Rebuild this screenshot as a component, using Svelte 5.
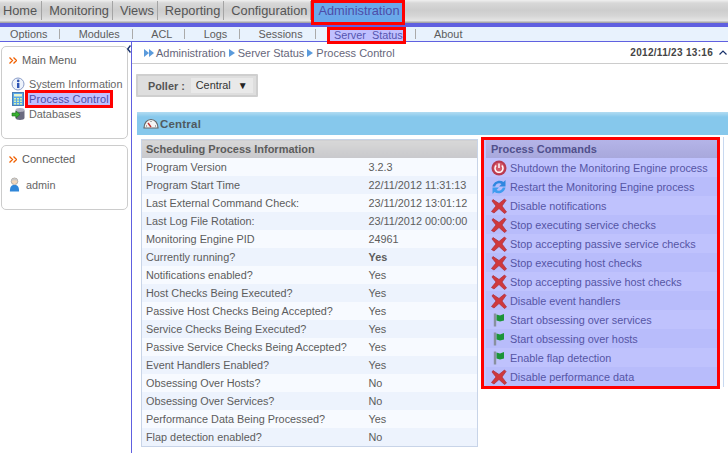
<script>
  const nav = ['Home', 'Monitoring', 'Views', 'Reporting', 'Configuration'];
  const sub = ['Options', 'Modules', 'ACL', 'Logs', 'Sessions'];
  const info = [
    ['Program Version', '3.2.3'],
    ['Program Start Time', '22/11/2012 11:31:13'],
    ['Last External Command Check:', '23/11/2012 13:01:12'],
    ['Last Log File Rotation:', '23/11/2012 00:00:00'],
    ['Monitoring Engine PID', '24961'],
    ['Currently running?', 'Yes', true],
    ['Notifications enabled?', 'Yes'],
    ['Host Checks Being Executed?', 'Yes'],
    ['Passive Host Checks Being Accepted?', 'Yes'],
    ['Service Checks Being Executed?', 'Yes'],
    ['Passive Service Checks Being Accepted?', 'Yes'],
    ['Event Handlers Enabled?', 'Yes'],
    ['Obsessing Over Hosts?', 'No'],
    ['Obsessing Over Services?', 'No'],
    ['Performance Data Being Processed?', 'Yes'],
    ['Flap detection enabled?', 'No']
  ];
  const commands = [
    ['power', 'Shutdown the Monitoring Engine process'],
    ['refresh', 'Restart the Monitoring Engine process'],
    ['x', 'Disable notifications'],
    ['x', 'Stop executing service checks'],
    ['x', 'Stop accepting passive service checks'],
    ['x', 'Stop executing host checks'],
    ['x', 'Stop accepting passive host checks'],
    ['x', 'Disable event handlers'],
    ['flag', 'Start obsessing over services'],
    ['flag', 'Start obsessing over hosts'],
    ['flag', 'Enable flap detection'],
    ['x', 'Disable performance data']
  ];
</script>

<div class="page">
  <nav class="topnav">
    {#each nav as item}
      <span class="topitem">{item}</span>
    {/each}
    <span class="topactive">Administration</span>
  </nav>
  <div class="band"></div>
  <div class="subnav">
    {#each sub as item}
      <span class="subitem">{item}</span>
    {/each}
    <span class="subitem subactive"><b>Server&nbsp; Status</b></span>
    <span class="subitem last">About</span>
  </div>

  <div class="body">
    <aside class="side">
      <section class="card menu">
        <h3>
          <svg class="chev" viewBox="0 0 8 7" width="8" height="7"><path d="M.5 .5 3.500 3.500.5 6.500M4.500 .5 7.500 3.500 4.500 6.500" fill="none" stroke="#f06000" stroke-width="1.300"/></svg>
          Main Menu
        </h3>
        <ul>
          <li>
            <svg viewBox="0 0 14 14" width="14" height="14"><circle cx="7" cy="7" r="6" fill="#eef3fb" stroke="#8a9cc8"/><rect x="6" y="6" width="2.400" height="5" fill="#2f55b5"/><circle cx="7.200" cy="3.900" r="1.300" fill="#2f55b5"/></svg>
            <span>System Information</span>
          </li>
          <li>
            <svg viewBox="0 0 14 14" width="14" height="14"><rect x="1.500" y="0.500" width="11" height="13" fill="#58a8e8" stroke="#4a7fb8"/><rect x="3" y="2" width="8" height="2.500" fill="#e8f4d0"/><path d="M3 6h2v1.500H3zM6 6h2v1.500H6zM9 6h2v1.500H9zM3 8.500h2V10H3zM6 8.500h2V10H6zM9 8.500h2V10H9zM3 11h2v1.500H3zM6 11h2v1.500H6zM9 11h2v1.500H9z" fill="#d8f0a8"/></svg>
            <span class="hl">Process Control</span>
          </li>
          <li>
            <svg viewBox="0 0 14 14" width="14" height="14"><ellipse cx="9" cy="3" rx="4.500" ry="2" fill="#b0b0c0"/><path d="M4.500 3v8c0 1.100 2 2 4.500 2s4.500-.9 4.500-2V3c0 1.100-2 2-4.500 2S4.500 4.100 4.500 3z" fill="#6a6a80"/><path d="M1 6h4V4l4 3.500L5 11V9H1z" fill="#38b030" stroke="#1d6e20" stroke-width=".6"/></svg>
            <span>Databases</span>
          </li>
        </ul>
      </section>
      <section class="card conn">
        <h3>
          <svg class="chev" viewBox="0 0 8 7" width="8" height="7"><path d="M.5 .5 3.500 3.500.5 6.500M4.500 .5 7.500 3.500 4.500 6.500" fill="none" stroke="#f06000" stroke-width="1.300"/></svg>
          Connected
        </h3>
        <div class="user">
          <svg viewBox="0 0 12 16" width="11" height="15"><path d="M1 15.500c0-5 1.500-7 5-7s5 2 5 7z" fill="#2f86d8"/><circle cx="6" cy="4.500" r="3.600" fill="#f2d6b8" stroke="#a8a8a8"/><path d="M2.500 4C3 .5 9 .5 9.500 4 7.500 3 4.500 3 2.500 4z" fill="#c8c8c8"/></svg>
          <span>admin</span>
        </div>
      </section>
      <svg class="collapse" viewBox="0 0 4 8" width="4" height="8"><path d="M3.500 .5 .7 4 3.500 7.500" fill="none" stroke="#16306a" stroke-width="1.400"/></svg>
    </aside>

    <main class="main">
      <div class="crumbs">
        <div class="trail">
          <svg class="first" viewBox="0 0 10 10" width="10" height="10"><path d="M0 1l5 4-5 4zM5 1l5 4-5 4z" fill="#5b9bdc"/></svg>
          <span>Administration</span>
          <svg class="tri" viewBox="0 0 6 10" width="6" height="10"><path d="M0 1l6 4-6 4z" fill="#5b9bdc"/></svg>
          <span>Server Status</span>
          <svg class="tri" viewBox="0 0 6 10" width="6" height="10"><path d="M0 1l6 4-6 4z" fill="#5b9bdc"/></svg>
          <span>Process Control</span>
        </div>
        <div class="clock">
          <b>2012/11/23 13:16</b>
          <svg viewBox="0 0 8 5" width="8" height="5"><path d="M.5 4.500 4 1l3.500 3.500" fill="none" stroke="#16306a" stroke-width="1.200"/></svg>
        </div>
      </div>

      <div class="poller">
        <b>Poller :</b>
        <span class="select">Central <i>▼</i></span>
      </div>

      <div class="panel">
        <header class="panelhead">
          <svg viewBox="0 0 16 11" width="16" height="11"><path d="M1 10C1 5 4 1.500 8 1.500S15 5 15 10z" fill="#f4f4f4" stroke="#666" stroke-width="1.200"/><path d="M8 9 5 5" stroke="#c03030" stroke-width="1.400"/><path d="M3 8h1M12 8h1M8 3v1" stroke="#666"/></svg>
          <b>Central</b>
        </header>
        <div class="columns">
          <table class="infotable">
            <colgroup><col class="c1" /><col /></colgroup>
            <thead><tr><th colspan="2">Scheduling Process Information</th></tr></thead>
            <tbody>
              {#each info as [label, value, strong]}
                <tr>
                  <td>{label}</td>
                  <td class:strong>{value}</td>
                </tr>
              {/each}
            </tbody>
          </table>

          <div class="rightcol">
            <div class="commands">
              <h4>Process Commands</h4>
              {#each commands as [icon, label]}
                <div class="cmd">
                  <span class="ico">
                    {#if icon === 'power'}
                      <svg viewBox="0 0 16 16" width="16" height="16"><circle cx="8" cy="8" r="7.500" fill="#b83a50"/><circle cx="8" cy="8" r="5.500" fill="#d45a68"/><path d="M5.200 5.500a4 4 0 1 0 5.600 0" fill="none" stroke="#fff" stroke-width="1.500"/><path d="M8 3.500v4.500" stroke="#fff" stroke-width="1.500"/></svg>
                    {:else if icon === 'refresh'}
                      <svg viewBox="0 0 16 16" width="16" height="16"><path d="M1.500 7.500C2.500 2.500 8.500 0 12.500 3L14.500 1V7.500H8L10.500 5C8 3.500 5 4.500 4.200 7.500z" fill="#2f86e0"/><path d="M14.500 8.500C13.500 13.500 7.500 16 3.500 13L1.500 15V8.500H8L5.500 11C8 12.500 11 11.500 11.800 8.500z" fill="#3f9cf0"/></svg>
                    {:else if icon === 'x'}
                      <svg viewBox="0 0 16 16" width="16" height="16"><path d="M2 1.500 8 5.500 13.500 1l1.500 1.500-4 5.500 4.500 6-2 1.500L8 10.500 3 15l-2.500-1.500L5 8 1 3z" fill="#d0383c" stroke="#a82c3a" stroke-width=".7" stroke-linejoin="round"/></svg>
                    {:else}
                      <svg viewBox="0 0 16 16" width="16" height="16"><path d="M4 1.500v13" stroke="#8890a0" stroke-width="2.400"/><path d="M5.500 2.500 9 3.500l4-1.500v6.500L9 9.500 5.500 8.500z" fill="#1c9438"/></svg>
                    {/if}
                  </span>
                  <span>{label}</span>
                </div>
              {/each}
            </div>
          </div>
        </div>
      </div>
    </main>
  </div>
</div>

<style>
  :global(body) { margin: 0; background: #fff; }
  .page {
    width: 728px; height: 453px; overflow: hidden;
    font-family: "Liberation Sans", Arial, sans-serif;
    font-size: 10.850px; color: #5c5c5c;
    display: flex; flex-direction: column;
  }
  .topnav {
    height: 23px; display: flex; align-items: flex-start; flex: none;
    background: linear-gradient(#f0f0f0 0, #d8d8d8 3px, #cdcdcd 10px, #d6d6d6 16px, #e6e6e6 21px, #a8a8a8 22px);
    font-size: 12.800px; color: #555;
  }
  .topitem {
    padding: 0 3px 0 7px; border-right: 1px solid #a4a4a4; margin: 1px 0 0;
    height: 19px; line-height: 19px; white-space: nowrap;
  }
  .topitem:first-child { padding: 0 4px 0 3px; }
  .topactive {
    position: relative; z-index: 1; height: 19px; line-height: 16px;
    padding: 0 2px 0 4px; background: #6aa8ea; color: #4d4da8;
    border: 3px solid #f00;
  }
  .band { height: 4px; background: #6060e0; flex: none; }
  .subnav {
    height: 14px; flex: none; display: flex; align-items: center;
    background: #e8f2fd; border-bottom: 1px solid #6060e0;
    padding-left: 10px; line-height: 14px;
  }
  .subitem { padding-right: 13px; margin-right: 18.400px; position: relative; white-space: nowrap; }
  .subitem::after {
    content: ""; position: absolute; right: 0; top: 2px; height: 10px; width: 1px; background: #aaa;
  }
  .subitem.last::after { display: none; }
  .subactive b {
    display: inline-block; height: 11px; line-height: 11px; font-weight: normal; color: #5555b0;
    background: #c0c0ff; outline: 3px solid #f00; padding-left: 4px; margin-left: -4px;
    vertical-align: middle;
  }
  .body { flex: 1; display: flex; min-height: 0; }
  .side {
    width: 127px; flex: none; border-right: 1px solid #6060e0; position: relative;
    padding: 4px 3px 0 1px;
    display: flex; flex-direction: column; gap: 6px;
  }
  .collapse { position: absolute; right: 0; top: 3px; }
  .card { border: 1px solid #ccc; border-radius: 5px; background: #fff; box-sizing: border-box; }
  .menu { height: 93px; }
  .conn { height: 65px; }
  .card h3 {
    margin: 0; font-weight: normal; font-size: 11px; line-height: 13px; color: #5c5c5c;
    padding: 7px 0 0 7px; display: flex; align-items: center; gap: 5px;
  }
  .card ul { list-style: none; margin: 9px 0 0; padding: 0 0 0 9px; }
  .card li { display: flex; align-items: center; gap: 4px; height: 15px; white-space: nowrap; color: #666; }
  .card li svg { flex: none; }
  .hl {
    background: #c0c0ff; color: #4d4da8; outline: 3px solid #f00; padding: 0 1px; margin-left: -1px;
    font-size: 11px; letter-spacing: .1px; line-height: 12px; height: 12px;
  }
  .user { display: flex; align-items: center; gap: 6px; padding: 11px 0 0 7px; color: #666; }
  .main { flex: 1; min-width: 0; }
  .crumbs {
    height: 21px; border-bottom: 1px solid #ccc; display: flex; justify-content: space-between; align-items: center;
    padding: 0 1px 0 12px;
  }
  .trail { display: flex; align-items: center; gap: 3px; color: #66667a; font-size: 11px; }
  .trail .first { margin-right: -1px; }
  .clock { display: flex; align-items: center; gap: 6px; font-size: 10px; color: #444; letter-spacing: 0.300px; }
  .poller {
    margin: 10px 0 0 4px; width: 122px; height: 23px; box-sizing: border-box;
    background: #dedede; border: 2px solid #cfcfcf; display: flex; align-items: center; gap: 6px; padding-left: 10px;
    color: #555; border-radius: 1px;
  }
  .select { background: #e9e9e9; padding: 1px 5px; color: #333; display: flex; gap: 7px; height: 13px; line-height: 13px; }
  .select i { font-style: normal; font-size: 10px; color: #222; }
  .panel { margin: 15px 0 0 5px; }
  .panelhead {
    height: 23px; box-sizing: border-box; display: flex; align-items: center; gap: 1px; padding-left: 6px;
    background: linear-gradient(#b2dcf2, #86c8ec 5px);
    font-size: 11.500px; color: #505a60; letter-spacing: .2px;
  }
  .columns { display: flex; align-items: flex-start; padding: 4px 0 0 4px; gap: 3px; }
  .infotable {
    width: 337px; border-collapse: collapse; border: 1px solid #c8d4e8; table-layout: fixed; flex: none;
  }
  .c1 { width: 223px; }
  .infotable th {
    height: 18px; padding: 0 0 0 4px; text-align: left; font-size: 11px; color: #5c5c5c;
    background: linear-gradient(#d8d8d8, #c8c8cc);
  }
  .infotable td { height: 18px; padding: 0 0 0 4px; white-space: nowrap; color: #5c5c5c; }
  .infotable tr:nth-child(odd) td { background: #f7faff; }
  .infotable tr:nth-child(even) td { background: #edf3fd; }
  .strong { font-weight: bold; }
  .rightcol {
    margin-top: -2px; width: 243px; height: 250px; box-sizing: border-box; flex: none;
    padding-right: 3px; border-right: 1px solid #c8d8f0;
  }
  .commands {
    box-sizing: border-box;
    border: 3px solid #f00; background: #bfc2fd;
    padding-left: 2px; height: 252px; color: #5555a5;
  }
  .commands h4 {
    margin: 0; height: 18px; line-height: 18px; font-size: 11px; padding-left: 5px; color: #50508c;
    background: linear-gradient(#b4b4e8, #a8a8dc);
  }
  .cmd { height: 19px; display: flex; align-items: center; gap: 3px; white-space: nowrap; padding-left: 5px; }
  .cmd:nth-of-type(even) { background: #b8bcfb; }
  .ico { width: 16px; height: 16px; display: block; flex: none; }
  .ico svg { display: block; }
</style>
